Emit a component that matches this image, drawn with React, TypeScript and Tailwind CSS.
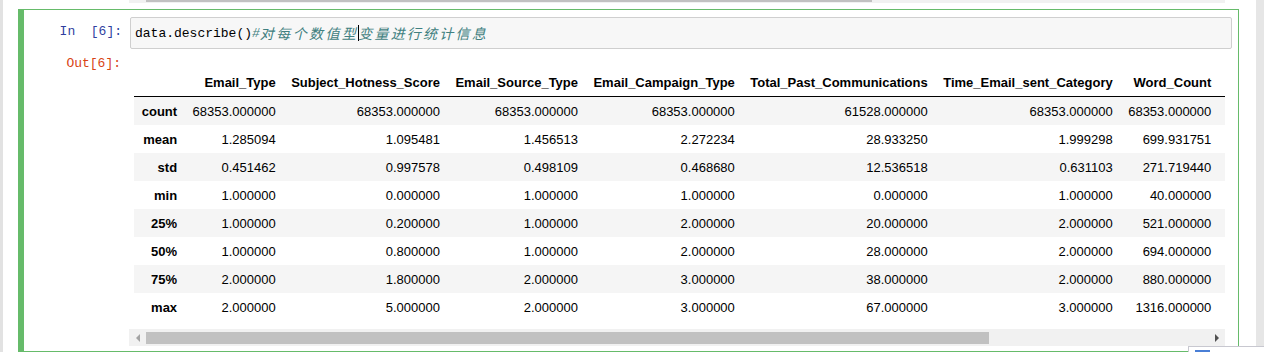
import React from "react";

const cols = [
  "Email_Type",
  "Subject_Hotness_Score",
  "Email_Source_Type",
  "Email_Campaign_Type",
  "Total_Past_Communications",
  "Time_Email_sent_Category",
  "Word_Count",
  "Total_Links",
  "Total_Images",
  "Email_Status",
];

const rows: [string, string[]][] = [
  ["count", ["68353.000000", "68353.000000", "68353.000000", "68353.000000", "61528.000000", "68353.000000", "68353.000000", "66152.000000", "66676.000000", "68353.000000"]],
  ["mean", ["1.285094", "1.095481", "1.456513", "2.272234", "28.933250", "1.999298", "699.931751", "10.429526", "3.550719", "0.230934"]],
  ["std", ["0.451462", "0.997578", "0.498109", "0.468680", "12.536518", "0.631103", "271.719440", "6.383270", "5.596983", "0.497032"]],
  ["min", ["1.000000", "0.000000", "1.000000", "1.000000", "0.000000", "1.000000", "40.000000", "1.000000", "0.000000", "0.000000"]],
  ["25%", ["1.000000", "0.200000", "1.000000", "2.000000", "20.000000", "2.000000", "521.000000", "6.000000", "0.000000", "0.000000"]],
  ["50%", ["1.000000", "0.800000", "1.000000", "2.000000", "28.000000", "2.000000", "694.000000", "9.000000", "0.000000", "0.000000"]],
  ["75%", ["2.000000", "1.800000", "2.000000", "3.000000", "38.000000", "2.000000", "880.000000", "14.000000", "5.000000", "0.000000"]],
  ["max", ["2.000000", "5.000000", "2.000000", "3.000000", "67.000000", "3.000000", "1316.000000", "49.000000", "45.000000", "2.000000"]],
];

const mono = "font-['Liberation_Mono','DejaVu_Sans_Mono',monospace]";
const cell = "px-[7.72px] py-[6.5px] leading-[15px] text-right";

export default function App() {
  return (
    <div className="relative flex h-[352px] w-[1264px] overflow-hidden bg-[#e6e6e6]">
      <div className="w-[3px] shrink-0 bg-[#e2e2e2]" />
      <div className="flex w-[1253px] shrink-0 flex-col bg-white">
        {/* previous cell output scrollbar remnant */}
        <div className="h-[9px] shrink-0">
          <div className="ml-[126px] flex h-[3px] w-[1096px] bg-[#f1f1f1]">
            <div className="w-[17px]" />
            <div className="h-[2px] w-[726px] bg-[#c1c1c1]" />
          </div>
        </div>

        {/* selected cell */}
        <div className="ml-[15px] flex h-[343px] w-[1221px] shrink-0 flex-col border border-l-[6px] border-[#66bb6a] pt-[7px]">
          {/* input row */}
          <div className="flex">
            <div
              className={`w-[106px] shrink-0 pr-[8px] pt-[6px] text-right text-[13px] leading-[17px] text-[#303f9f] ${mono}`}
            >
              In&nbsp;&nbsp;[6]:
            </div>
            <div className="flex h-[32px] w-[1102px] items-center rounded-[2px] border border-[#cfcfcf] bg-[#f7f7f7] pl-[4px]">
              <span className={`text-[13px] leading-[17px] text-black ${mono}`}>data.describe()</span>
              <span className={`text-[13px] italic leading-[17px] text-[#408080] ${mono}`}>#</span>
              <span className="text-[14px] italic leading-[17px] tracking-[2.4px] text-[#408080] font-['Noto_Sans_CJK_SC',sans-serif]">
                对每个数值型
              </span>
              <span className="mr-[-1px] inline-block h-[16px] w-px bg-black" />
              <span className="text-[14px] italic leading-[17px] tracking-[2.2px] text-[#408080] font-['Noto_Sans_CJK_SC',sans-serif]">
                变量进行统计信息
              </span>
            </div>
          </div>

          {/* output row */}
          <div className="flex">
            <div
              className={`w-[105px] shrink-0 pr-[8px] pt-[6px] text-right text-[13px] leading-[17px] text-[#d84315] ${mono}`}
            >
              Out[6]:
            </div>
            <div className="flex w-[1096px] shrink-0 flex-col">
              <div className="h-[280px] overflow-hidden pl-[5px] pt-[19px]">
                <table className="border-collapse whitespace-nowrap text-[13px] text-black font-['Liberation_Sans',Arial,sans-serif]">
                  <thead>
                    <tr>
                      <th className={`${cell} border-b border-black`} />
                      {cols.map((c) => (
                        <th key={c} className={`${cell} border-b border-black font-bold`}>
                          {c}
                        </th>
                      ))}
                    </tr>
                  </thead>
                  <tbody>
                    {rows.map(([label, vals], i) => (
                      <tr key={label} className={i % 2 === 0 ? "bg-[#f5f5f5]" : "bg-white"}>
                        <th className={`${cell} font-bold`}>{label}</th>
                        {vals.map((v, j) => (
                          <td key={j} className={cell}>
                            {v}
                          </td>
                        ))}
                      </tr>
                    ))}
                  </tbody>
                </table>
              </div>
              {/* horizontal scrollbar */}
              <div className="flex h-[17px] w-[1096px] bg-[#f1f1f1]">
                <div className="flex w-[17px] items-center justify-center">
                  <div className="h-0 w-0 border-y-[4px] border-r-[4px] border-y-transparent border-r-[#a3a3a3]" />
                </div>
                <div className="flex flex-1 items-center">
                  <div className="h-[12px] w-[843px] bg-[#c1c1c1]" />
                </div>
                <div className="flex w-[17px] items-center justify-center">
                  <div className="h-0 w-0 border-y-[4px] border-l-[4px] border-y-transparent border-l-[#505050]" />
                </div>
              </div>
            </div>
          </div>
        </div>
      </div>
      <div className="w-[8px] shrink-0 bg-[#e6e6e6]" />

      {/* small floating box bottom right */}
      <div className="absolute left-[1188px] top-[346px] h-[8px] w-[80px] border-l border-t border-[#c8c8d0] bg-white">
        <div className="ml-[6px] mt-[3px] h-[4px] w-[15px] bg-[#4a7fd6]" />
      </div>
    </div>
  );
}
